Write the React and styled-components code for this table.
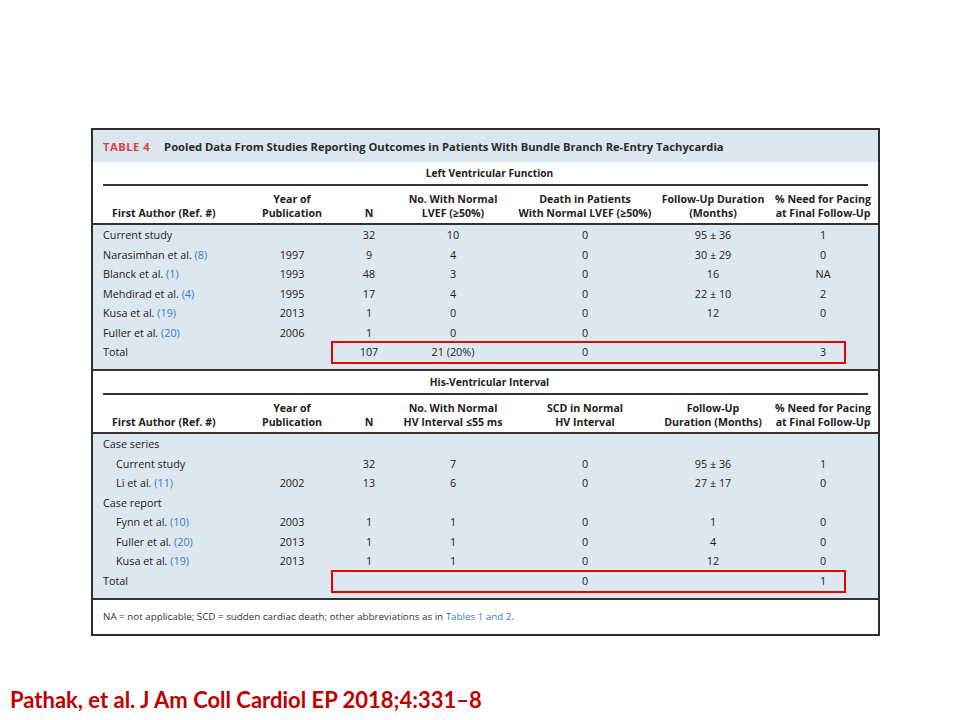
import React from 'react';
import styled, { createGlobalStyle } from 'styled-components';

const GlobalStyle = createGlobalStyle`
    html, body {
        margin: 0;
        padding: 0;
        background: #ffffff;
    }
`;

const COLS = '147px 84px 70px 98px 166px 90px 120px';

const lvRows = [
    { author: 'Current study', year: '', n: '32', normal: '10', death: '0', follow: '95 ± 36', pacing: '1' },
    { author: 'Narasimhan et al.', ref: '8', year: '1997', n: '9', normal: '4', death: '0', follow: '30 ± 29', pacing: '0' },
    { author: 'Blanck et al.', ref: '1', year: '1993', n: '48', normal: '3', death: '0', follow: '16', pacing: 'NA' },
    { author: 'Mehdirad et al.', ref: '4', year: '1995', n: '17', normal: '4', death: '0', follow: '22 ± 10', pacing: '2' },
    { author: 'Kusa et al.', ref: '19', year: '2013', n: '1', normal: '0', death: '0', follow: '12', pacing: '0' },
    { author: 'Fuller et al.', ref: '20', year: '2006', n: '1', normal: '0', death: '0', follow: '', pacing: '' },
    { author: 'Total', year: '', n: '107', normal: '21 (20%)', death: '0', follow: '', pacing: '3', total: true },
];

const hvRows = [
    { author: 'Case series', group: true },
    { author: 'Current study', sub: true, year: '', n: '32', normal: '7', death: '0', follow: '95 ± 36', pacing: '1' },
    { author: 'Li et al.', ref: '11', sub: true, year: '2002', n: '13', normal: '6', death: '0', follow: '27 ± 17', pacing: '0' },
    { author: 'Case report', group: true },
    { author: 'Fynn et al.', ref: '10', sub: true, year: '2003', n: '1', normal: '1', death: '0', follow: '1', pacing: '0' },
    { author: 'Fuller et al.', ref: '20', sub: true, year: '2013', n: '1', normal: '1', death: '0', follow: '4', pacing: '0' },
    { author: 'Kusa et al.', ref: '19', sub: true, year: '2013', n: '1', normal: '1', death: '0', follow: '12', pacing: '0' },
    { author: 'Total', year: '', n: '', normal: '', death: '0', follow: '', pacing: '1', total: true },
];

const lvHeads = [
    'First Author (Ref. #)',
    ['Year of', 'Publication'],
    'N',
    ['No. With Normal', 'LVEF (≥50%)'],
    ['Death in Patients', 'With Normal LVEF (≥50%)'],
    ['Follow-Up Duration', '(Months)'],
    ['% Need for Pacing', 'at Final Follow-Up'],
];

const hvHeads = [
    'First Author (Ref. #)',
    ['Year of', 'Publication'],
    'N',
    ['No. With Normal', 'HV Interval ≤55 ms'],
    ['SCD in Normal', 'HV Interval'],
    ['Follow-Up', 'Duration (Months)'],
    ['% Need for Pacing', 'at Final Follow-Up'],
];

const HeadRow = ({ heads }) => (
    <HeaderRow>
        {heads.map((h, i) => (
            <HeadCell key={i} $first={i === 0} $last={i === heads.length - 1}>
                <HeadText>
                    {Array.isArray(h) ? <>{h[0]}<br />{h[1]}</> : h}
                </HeadText>
            </HeadCell>
        ))}
    </HeaderRow>
);

const DataRow = ({ row }) => {
    if (row.group) {
        return (
            <Row>
                <AuthorCell>{row.author}</AuthorCell>
            </Row>
        );
    }
    const cells = [row.year, row.n, row.normal, row.death, row.follow, row.pacing];
    return (
        <Row>
            <AuthorCell $sub={row.sub}>
                {row.author}
                {row.ref && <RefLink> ({row.ref})</RefLink>}
            </AuthorCell>
            {cells.map((c, i) => (
                <Cell key={i} $last={i === cells.length - 1}>{c}</Cell>
            ))}
            {row.total && <Highlight />}
        </Row>
    );
};

const App = () => {
    return (
        <Page>
            <GlobalStyle />
            <TableBox>
                <TitleBar>
                    <TableTag>TABLE 4</TableTag>
                    <TitleText>Pooled Data From Studies Reporting Outcomes in Patients With Bundle Branch Re-Entry Tachycardia</TitleText>
                </TitleBar>
                <HeadSection>
                    <GroupLabel>Left Ventricular Function</GroupLabel>
                    <Rule />
                    <HeadRow heads={lvHeads} />
                </HeadSection>
                <Body>
                    {lvRows.map((r, i) => <DataRow key={i} row={r} />)}
                </Body>
                <HeadSection>
                    <GroupLabel>His-Ventricular Interval</GroupLabel>
                    <Rule />
                    <HeadRow heads={hvHeads} />
                </HeadSection>
                <Body>
                    {hvRows.map((r, i) => <DataRow key={i} row={r} />)}
                </Body>
                <Footer>
                    NA = not applicable; SCD = sudden cardiac death; other abbreviations as in{' '}
                    <RefLink>Tables 1 and 2</RefLink>.
                </Footer>
            </TableBox>
            <Citation>Pathak, et al. J Am Coll Cardiol EP 2018;4:331–8</Citation>
        </Page>
    );
};

const Page = styled.div`
    width: 960px;
    height: 720px;
    box-sizing: border-box;
    padding: 128px 0 0 91px;
    display: flex;
    flex-direction: column;
    font-family: "Open Sans", "Noto Sans", sans-serif;
    color: #222;
`;

const TableBox = styled.div`
    width: 789px;
    height: 508px;
    box-sizing: border-box;
    border: 2px solid #2e2e2e;
    display: flex;
    flex-direction: column;
    background: #ffffff;
`;

const TitleBar = styled.div`
    height: 32px;
    background: #dce6ef;
    display: flex;
    align-items: center;
    padding-left: 10px;
    font-size: 11.2px;
    font-weight: 700;
    white-space: nowrap;
`;

const TableTag = styled.span`
    color: #d8443b;
    letter-spacing: 0.5px;
    margin-right: 14px;
`;

const TitleText = styled.span`
    color: #2b2b2b;
`;

const HeadSection = styled.div`
    background: #ffffff;
    border-bottom: 2px solid #333;
`;

const GroupLabel = styled.div`
    height: 22px;
    display: flex;
    align-items: center;
    justify-content: center;
    padding-left: 8px;
    font-size: 10.2px;
    font-weight: 700;
    color: #222;
`;

const Rule = styled.div`
    margin: 0 10px;
    border-top: 2px solid #333;
`;

const HeaderRow = styled.div`
    display: grid;
    grid-template-columns: ${COLS};
    padding: 6px 0 3px 10px;
    align-items: end;
`;

const HeadCell = styled.div`
    display: flex;
    justify-content: ${(p) => (p.$first ? 'flex-start' : 'center')};
    padding-left: ${(p) => (p.$first ? '9px' : p.$last ? '10px' : '0')};
`;

const HeadText = styled.span`
    font-size: 10.6px;
    font-weight: 700;
    line-height: 14px;
    text-align: center;
    white-space: nowrap;
    color: #222;
`;

const Body = styled.div`
    background: #dde7f0;
    padding-bottom: 7.5px;
    border-bottom: 2px solid #333;
`;

const Row = styled.div`
    position: relative;
    display: grid;
    grid-template-columns: ${COLS};
    height: 19.5px;
    align-items: center;
    padding-left: 10px;
    font-size: 10.8px;
    color: #222;
`;

const AuthorCell = styled.div`
    white-space: nowrap;
    padding-left: ${(p) => (p.$sub ? '13px' : '0')};
`;

const Cell = styled.div`
    display: flex;
    justify-content: center;
    white-space: nowrap;
    padding-left: ${(p) => (p.$last ? '10px' : '0')};
`;

const RefLink = styled.span`
    color: #3a7db8;
`;

const Highlight = styled.div`
    position: absolute;
    left: 238px;
    top: -1px;
    width: 515px;
    height: 23px;
    box-sizing: border-box;
    border: 2.5px solid #e60000;
    pointer-events: none;
`;

const Footer = styled.div`
    flex: 1;
    display: flex;
    align-items: center;
    padding-left: 10px;
    font-size: 9.8px;
    color: #333;
    white-space: pre;
`;

const Citation = styled.div`
    margin: 51px 0 0 -81px;
    font-family: Lato, "Open Sans", sans-serif;
    font-weight: 700;
    font-size: 22px;
    line-height: 26px;
    color: #c00000;
    white-space: nowrap;
`;

export default App;
